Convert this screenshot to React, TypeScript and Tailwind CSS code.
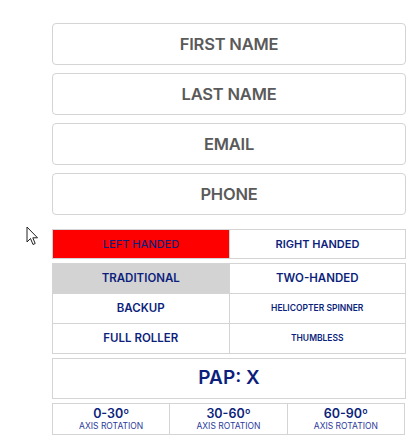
import { useState } from 'react';

const fields = ['FIRST NAME', 'LAST NAME', 'EMAIL', 'PHONE'];

const styles = [
  { label: 'TRADITIONAL', small: false },
  { label: 'TWO-HANDED', small: false },
  { label: 'BACKUP', small: false },
  { label: 'HELICOPTER SPINNER', small: true },
  { label: 'FULL ROLLER', small: false },
  { label: 'THUMBLESS', small: true },
];

const axes = ['0-30º', '30-60º', '60-90º'];

export default function App() {
  const [hand, setHand] = useState<'left' | 'right'>('left');
  const [style, setStyle] = useState('TRADITIONAL');

  return (
    <div className="relative min-h-screen bg-white font-['Inter',sans-serif]">
      {/* mouse pointer */}
      <svg className="absolute left-[26px] top-[226px]" width="13" height="20" viewBox="0 0 13 20">
        <path d="M1 1 L1 16 L4.5 12.5 L7 18.5 L9.2 17.5 L6.8 11.8 L11.5 11.8 Z" fill="#fff" stroke="#222" strokeWidth="1" strokeLinejoin="round" />
      </svg>

      <div className="ml-[52px] w-[354px] pt-[23px] flex flex-col">
        <div className="flex flex-col gap-[8px]">
          {fields.map((f) => (
            <input
              key={f}
              placeholder={f}
              className="h-[42px] w-full rounded-[4px] border border-[#d4d4d4] text-center text-[16.5px] font-semibold tracking-[-0.2px] text-[#5a5a5a] placeholder:text-[#5a5a5a] outline-none"
            />
          ))}
        </div>

        <div className="mt-[14px] grid grid-cols-2 border border-[#d4d4d4] h-[30px]">
          <button
            onClick={() => setHand('left')}
            className={`text-[11px] font-medium text-[#0d1f7c] ${hand === 'left' ? 'bg-[#ff0000]' : 'bg-white'}`}
          >
            LEFT HANDED
          </button>
          <button
            onClick={() => setHand('right')}
            className={`border-l border-[#d4d4d4] text-[11px] font-semibold text-[#0d1f7c] ${hand === 'right' ? 'bg-[#ff0000]' : 'bg-white'}`}
          >
            RIGHT HANDED
          </button>
        </div>

        <div className="mt-[4px] grid grid-cols-2 gap-[1px] bg-[#d4d4d4] border border-[#d4d4d4]">
          {styles.map((s) => (
            <button
              key={s.label}
              onClick={() => setStyle(s.label)}
              className={`h-[29px] font-semibold text-[#0d1f7c] ${s.small ? 'text-[8.5px]' : 'text-[11.5px]'} ${style === s.label ? 'bg-[#d3d3d3]' : 'bg-white'}`}
            >
              {s.label}
            </button>
          ))}
        </div>

        <div className="mt-[4px] h-[41px] border border-[#d4d4d4] flex items-center justify-center text-[19px] font-semibold text-[#0d1f7c]">
          PAP: X
        </div>

        <div className="mt-[4px] grid grid-cols-3 gap-[1px] bg-[#d4d4d4] border border-[#d4d4d4] w-[353px]">
          {axes.map((a) => (
            <div key={a} className="h-[30px] bg-white flex flex-col items-center justify-center text-[#0d1f7c]">
              <span className="text-[12.5px] font-semibold leading-[14px]">{a}</span>
              <span className="text-[8.5px] leading-[11px] text-[#2b3a9a]">AXIS ROTATION</span>
            </div>
          ))}
        </div>
      </div>
    </div>
  );
}
